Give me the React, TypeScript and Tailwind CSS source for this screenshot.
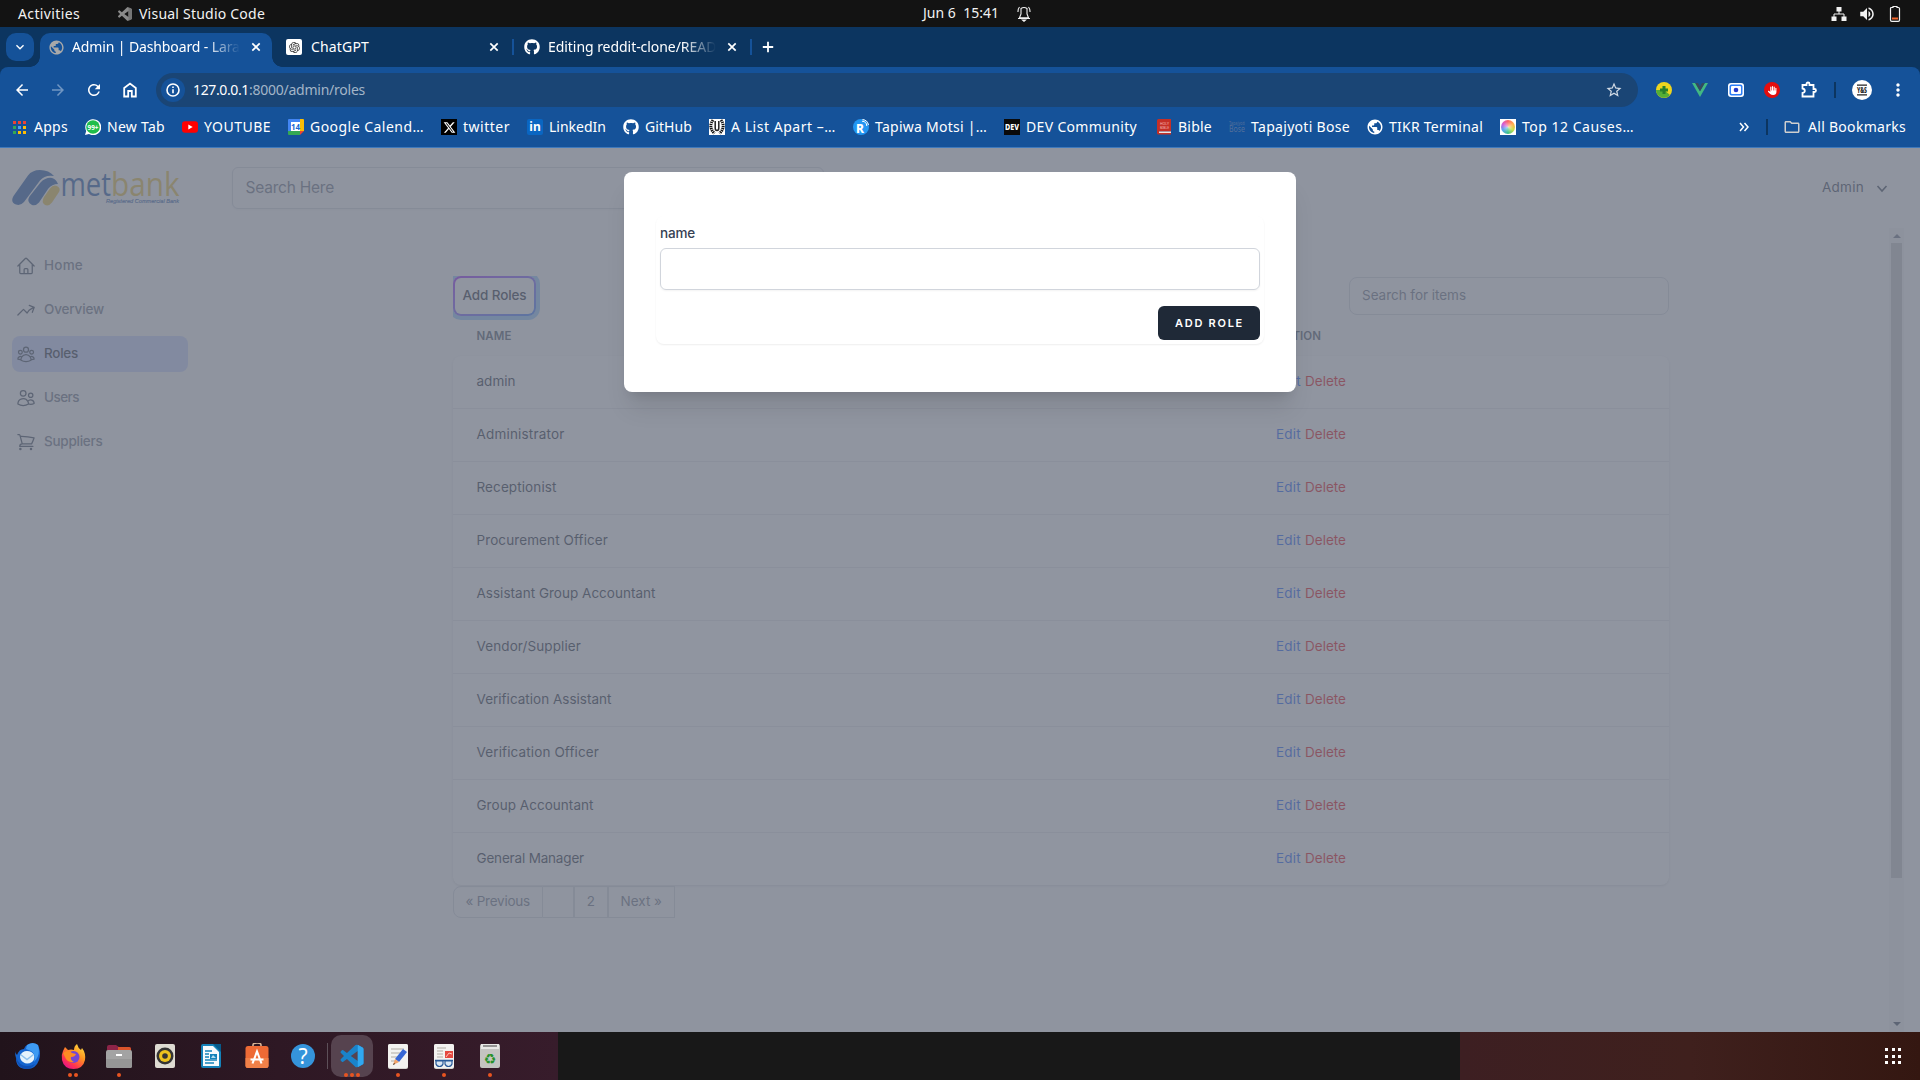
import { useLayoutEffect, useRef, type ReactNode } from "react";
import {
  MdArrowBack, MdArrowForward, MdKeyboardArrowDown, MdMoreVert,
  MdOutlineFolder, MdRefresh, MdStarOutline, MdVolumeUp, MdPublic,
} from "react-icons/md";
import { FaGithub, FaXTwitter, FaHand } from "react-icons/fa6";
import {
  HiOutlineArrowTrendingUp, HiOutlineHome, HiOutlineShoppingCart, HiOutlineUserGroup, HiOutlineUsers,
} from "react-icons/hi2";
import { RiOpenaiFill } from "react-icons/ri";

/* Text that spreads its letter spacing so it fills exactly `w` pixels. */
function Fit({ w, children, className = "" }: { w: number; children: string; className?: string }) {
  const inner = useRef<HTMLSpanElement>(null);
  useLayoutEffect(() => {
    const el = inner.current;
    if (!el) return;
    el.style.letterSpacing = "0px";
    const natural = el.getBoundingClientRect().width;
    el.style.letterSpacing = `${(w - natural) / children.length}px`;
  }, [w, children]);
  return (
    <span className={`inline-block shrink-0 whitespace-pre ${className}`} style={{ width: w }}>
      <span ref={inner}>{children}</span>
    </span>
  );
}

function CodeMark({ size }: { size: number }) {
  return (
    <svg width={size} height={size} viewBox="0 0 100 100" fillRule="evenodd" className="shrink-0">
      <path fill="#8a8a8a" d="M71 1 96 13Q100 15 100 20V80Q100 85 96 87L71 99Q67 100 64 97L28 63 12 75Q9 77 6 75L1 70Q-1 67 1 64L15 50 1 36Q-1 33 1 30L6 25Q9 23 12 25L28 37 64 3Q67 0 71 1ZM75 28 45 50 75 72Z" />
      <path fill="#767676" d="M75 1 96 13Q100 15 100 20V80Q100 85 96 87L75 99Z" />
    </svg>
  );
}

function Cross({ className }: { className: string }) {
  return <svg width="14" height="14" viewBox="0 0 14 14" fill="none" stroke="#fff" strokeWidth="1.7" className={className}><path d="m3.3 3.300 7.400 7.400M10.700 3.300 3.300 10.700" /></svg>;
}

function TopBar() {
  return (
    <header className="flex h-[27px] shrink-0 items-center bg-[#131313] text-[14px] leading-none text-[#f2f2f2]">
      <Fit w={62} className="ml-[18px]">Activities</Fit>
      <div className="ml-[38px]"><CodeMark size={14} /></div>
      <Fit w={126} className="ml-[7px]">Visual Studio Code</Fit>
      <Fit w={76} className="ml-[658px] pb-0.5">Jun 6  15:41</Fit>
      <svg width="14" height="16" viewBox="0 0 14 16" fill="none" stroke="#f2f2f2" strokeWidth="1.1" className="ml-[18px]"><path d="M4 2.500Q7 .500 10 2.500V8l1.500 3.800H2.500L4 8ZM2.500 1Q.800 3 1 6M11.500 1q1.700 2 1.500 5M1 12.500h12"/><path d="M5.500 14h3L7 15.300Z" fill="#f2f2f2"/></svg>
      <div className="ml-[800px] flex items-center gap-[11px]">
        <svg width="16" height="14" viewBox="0 0 16 14" fill="#f2f2f2"><path d="M5.500 0h5v4.500h-5zM.500 9.500h5V14h-5zM10.500 9.500h5V14h-5z"/><path d="M8 4v3M3 10V7h10v3" stroke="#f2f2f2" fill="none"/></svg>
        <MdVolumeUp size={18} />
        <svg width="12" height="16" viewBox="0 0 12 16" className="ml-0.5"><path d="M4 1.500V.500h4v1h1.500q1 0 1 1v11.500q0 1.300-1.300 1.300H2.800q-1.300 0-1.300-1.300V2.500q0-1 1-1Z" fill="none" stroke="#f2f2f2" strokeWidth="1.200"/><path d="M3 11.500h6v2H3z" fill="#f0642a"/></svg>
      </div>
    </header>
  );
}

function TabStrip() {
  return (
    <div className="flex h-10 shrink-0 items-start bg-[#0c3560] pt-1.5 text-[14px] leading-none text-white">
      <div className="ml-1.5 flex size-7 items-center justify-center rounded-[10px] bg-[#155299]"><MdKeyboardArrowDown size={16} /></div>
      <div className="relative ml-1.5 flex h-[34px] w-[232px] items-center rounded-t-[10px] bg-[#155299] pb-1.5">
        <i className="absolute bottom-0 -left-2.5 size-2.5 bg-[radial-gradient(circle_at_0_0,transparent_9.5px,#155299_10px)]" />
        <i className="absolute -right-2.5 bottom-0 size-2.5 bg-[radial-gradient(circle_at_100%_0,transparent_9.5px,#155299_10px)]" />
        <MdPublic size={17} className="ml-2 text-[#a9a9a9]" />
        <div className="ml-[7px] w-[168px] overflow-hidden py-1 [mask-image:linear-gradient(90deg,#000_80%,transparent)]"><Fit w={186}>Admin | Dashboard - Laravel</Fit></div>
        <Cross className="ml-[9px]" />
      </div>
      <div className="ml-[14px] flex h-7 items-center">
        <span className="flex size-4 items-center justify-center rounded-[2px] bg-white text-[#333]"><RiOpenaiFill size={13} /></span>
        <Fit w={58} className="ml-[9px]">ChatGPT</Fit>
        <Cross className="ml-[118px]" />
        <i className="ml-[11px] h-4 w-0.5 bg-[#155299]" />
        <FaGithub size={16} className="ml-[10px]" />
        <div className="ml-2 w-[168px] overflow-hidden py-1 [mask-image:linear-gradient(90deg,#000_80%,transparent)]"><Fit w={214}>Editing reddit-clone/README.md</Fit></div>
        <Cross className="ml-[9px]" />
        <i className="ml-[11px] h-4 w-0.5 bg-[#155299]" />
        <svg width="12" height="12" viewBox="0 0 12 12" stroke="#fff" strokeWidth="1.800" className="ml-[10px]"><path d="M6 .800v10.400M.800 6h10.400"/></svg>
      </div>
    </div>
  );
}

function Toolbar() {
  return (
    <div className="shrink-0 bg-[#0c3560]">
      <div className="flex h-[46px] items-center rounded-t-lg bg-[#155299] text-[14px] leading-none text-white">
        <div className="ml-[13px] flex items-center gap-[18px]">
          <MdArrowBack size={18} />
          <MdArrowForward size={18} className="text-[#7096c2]" />
          <MdRefresh size={18} />
          <svg width="18" height="18" viewBox="0 0 18 18" fill="none" stroke="#fff" strokeWidth="1.800"><path d="M3.200 7 9 2.600 14.800 7v8.500h-4V10H7.200v5.500h-4Z"/></svg>
        </div>
        <div className="ml-[17px] flex h-[34px] w-[1482px] items-center rounded-full bg-[#1a4575]">
          <span className="ml-[5px] flex size-6 items-center justify-center rounded-full bg-[#155299]">
            <svg width="14" height="14" viewBox="0 0 14 14" fill="none" stroke="#fff" strokeWidth="1.600"><circle cx="7" cy="7" r="6"/><path d="M7 6.200v4M7 3.600v1.500"/></svg>
          </span>
          <Fit w={56} className="ml-2">127.0.0.1</Fit>
          <Fit w={116} className="text-[#a3b5c8]">:8000/admin/roles</Fit>
          <MdStarOutline size={18} className="mr-[15px] ml-auto text-[#d2dbe5]" />
        </div>
        <svg width="16" height="16" viewBox="0 0 16 16" className="ml-[18px]"><circle cx="8" cy="8" r="8" fill="#edd51f"/><path d="M0 8a8 8 0 0 0 14 5L8 8Z" fill="#54ae35"/><path d="M6.500 4h3v2.500H12v3H9.500V12h-3V9.500H4v-3h2.500Z" fill="#277f2b"/></svg>
        <svg width="16" height="14" viewBox="0 0 16 14" className="ml-5"><path d="M0 0h3.200L8 8.300 12.800 0H16L8 14Z" fill="#42b883"/><path d="M3.200 0H6l2 3.500L10 0h2.800L8 8.300Z" fill="#35495e"/></svg>
        <svg width="16" height="14" viewBox="0 0 16 14" className="ml-5"><rect width="16" height="14" rx="3" fill="#fff"/><rect x="1.500" y="1.500" width="13" height="11" rx="2" fill="#2c7ef7"/><rect x="3" y="3" width="10" height="8" rx="1" fill="#fff"/><circle cx="8" cy="7" r="2.300" fill="#2438c9"/></svg>
        <span className="ml-5 flex size-4 items-center justify-center rounded-full bg-[#e40d0d]"><FaHand size={9} /></span>
        <svg width="18" height="18" viewBox="0 0 18 18" fill="none" stroke="#fff" strokeWidth="1.800" className="ml-[20px]"><path d="M2.500 4h4V3q0-1.500 1.500-1.500T9.500 3v1h4v4h1q1.500 0 1.500 1.500T14.500 11h-1v4.500h-11V12q2.300-.300 2.300-2.200T2.500 7.500Z"/></svg>
        <i className="ml-4 h-4 w-0.5 bg-[#0c3560]" />
        <svg width="20" height="20" viewBox="0 0 20 20" className="ml-4"><circle cx="10" cy="10" r="10" fill="#fff"/><path d="M5 5.200h10M5 14.800h10" stroke="#222" strokeWidth="1.200"/><text x="5" y="13" fontSize="8" fontWeight="800" fill="#222" textLength="10" lengthAdjust="spacingAndGlyphs">Y&amp;S</text></svg>
        <MdMoreVert size={20} className="ml-4" />
      </div>
    </div>
  );
}

const appColors = ["bg-[#ea4335]", "bg-[#ea4335]", "bg-[#ea4335]", "bg-[#34a853]", "bg-[#4aa0f5]", "bg-[#fbbc05]", "bg-[#34a853]", "bg-[#fbbc05]", "bg-[#fbbc05]"];

const bookmarks: { name: string; w: number; icon: ReactNode }[] = [
  { name: "New Tab", w: 58, icon: <svg width="16" height="16" viewBox="0 0 16 16"><path d="M0 16 1.200 12A8 8 0 1 1 4 15Z" fill="#fff"/><circle cx="8" cy="8" r="6.800" fill="#1fbd4a"/><text x="8" y="10.800" fontSize="7.500" fontWeight="700" textAnchor="middle" fill="#fff" textLength="11" lengthAdjust="spacingAndGlyphs">99+</text></svg> },
  { name: "YOUTUBE", w: 67, icon: <svg width="16" height="16" viewBox="0 0 16 16"><rect y="2.300" width="16" height="11.400" rx="3" fill="#f00"/><path d="m6.300 5.500 4.400 2.500-4.400 2.500Z" fill="#fff"/></svg> },
  { name: "Google Calend…", w: 114, icon: <svg width="16" height="16" viewBox="0 0 16 16"><path d="M0 1q0-1 1-1h11v3H3v10H0Z" fill="#4285f4"/><path d="M12 0h3q1 0 1 1v11h-4Z" fill="#fbbc04"/><path d="M0 12h12v4H1q-1 0-1-1Z" fill="#34a853"/><path d="M12 12h4l-4 4Z" fill="#ea4335"/><path d="M3 3h9v9H3z" fill="#fff"/><text x="7.500" y="10.600" fontSize="8" fontWeight="700" textAnchor="middle" fill="#1967d2">14</text></svg> },
  { name: "twitter", w: 47, icon: <span className="flex size-4 items-center justify-center bg-black"><FaXTwitter size={13} /></span> },
  { name: "LinkedIn", w: 57, icon: <span className="flex size-4 items-center justify-center rounded-[2px] bg-[#0a66c2] pb-px text-[12px] font-bold">in</span> },
  { name: "GitHub", w: 47, icon: <FaGithub size={16} /> },
  { name: "A List Apart –…", w: 105, icon: <svg width="16" height="16" viewBox="0 0 16 16"><path d="M0 0h16v16H0z" fill="#fff"/><path d="M6.200 2v7q0 2.500 1.800 2.500T9.800 9V2" fill="none" stroke="#222" strokeWidth="1.500"/><path d="M4 1Q-1 8 5.500 14.500M12 1q5 7-1.500 13.500" fill="none" stroke="#111" strokeWidth="3" strokeDasharray="1.400 .700"/></svg> },
  { name: "Tapiwa Motsi |…", w: 112, icon: <svg width="16" height="16" viewBox="0 0 16 16"><circle cx="8" cy="8" r="8" fill="#2196f3"/><text x="7" y="14" fontSize="12" fontWeight="800" textAnchor="middle" fill="#fff">R</text><path d="M9 2.200a5 5 0 0 1 4.800 4.800M9.500 .500q5 .500 6 5.500" stroke="#fff" fill="none"/></svg> },
  { name: "DEV Community", w: 111, icon: <svg width="16" height="16" viewBox="0 0 16 16"><path d="M0 0h16v16H0z" fill="#0a0a0a"/><text x="1" y="11" fontSize="8" fontWeight="800" fill="#fff" textLength="14" lengthAdjust="spacingAndGlyphs">DEV</text></svg> },
];

const moreBookmarks: { name: string; w: number; icon: ReactNode }[] = [
  { name: "Bible", w: 34, icon: <svg width="16" height="16" viewBox="0 0 16 16"><path d="M1 1.500Q1 0 2.500 0H15v12.500H3.500V14H15v1.500H2.500Q1 15.500 1 14Z" fill="#c52f26"/><path d="M3 12.500h12V14H3z" fill="#f2e5e0"/><text x="4" y="5.500" fontSize="4" fill="#f3b6b0" textLength="9" lengthAdjust="spacingAndGlyphs">HOLY</text><text x="4" y="9.500" fontSize="4" fill="#f3b6b0" textLength="9" lengthAdjust="spacingAndGlyphs">BIBLE</text></svg> },
  { name: "Tapajyoti Bose", w: 99, icon: <svg width="16" height="16" viewBox="0 0 16 16" fill="#54709a"><text x="0" y="5.500" fontSize="5" textLength="16" lengthAdjust="spacingAndGlyphs">Tapajyoti</text><text x="0" y="13" fontSize="8" textLength="16" lengthAdjust="spacingAndGlyphs">Bose</text></svg> },
  { name: "TIKR Terminal", w: 94, icon: <MdPublic size={18} className="-m-px" /> },
  { name: "Top 12 Causes…", w: 112, icon: <span className="flex size-4 items-center justify-center bg-white"><span className="size-3.5 rounded-full bg-[radial-gradient(#ffffff99,transparent_55%),conic-gradient(#f66,#ffb04d,#c6df49,#3cc28a,#58a9ef,#d45bd8,#f66)]" /></span> },
];

function BookmarkBar() {
  return (
    <div className="flex h-[35px] shrink-0 items-center border-b border-[#3f79bc] bg-[#155299] pb-1.5 text-[14px] leading-none text-white">
      <div className="ml-[13px] grid size-[13px] grid-cols-3 gap-0.5">{appColors.map((c, i) => <i key={i} className={c} />)}</div>
      <Fit w={34} className="ml-2">Apps</Fit>
      <div className="ml-[17px] flex items-center gap-[17px]">
        {bookmarks.map((b) => <div key={b.name} className="flex items-center gap-1.5">{b.icon}<Fit w={b.w}>{b.name}</Fit></div>)}
      </div>
      <div className="ml-[19px] flex items-center gap-[17px]">
        {moreBookmarks.map((b) => <div key={b.name} className="flex items-center gap-1.5">{b.icon}<Fit w={b.w}>{b.name}</Fit></div>)}
      </div>
      <svg width="10" height="10" viewBox="0 0 10 10" fill="none" stroke="#fff" strokeWidth="1.500" className="ml-[105px]"><path d="m1 1 3.500 4L1 9M5.500 1 9 5 5.500 9"/></svg>
      <i className="ml-[17px] h-4 w-0.5 bg-[#0c3560]" />
      <MdOutlineFolder size={18} className="ml-[15px] text-[#cfcfcf]" />
      <Fit w={98} className="ml-[7px]">All Bookmarks</Fit>
    </div>
  );
}

function Logo() {
  return (
    <svg width="168" height="38" viewBox="0 0 168 38" className="shrink-0 font-['Open_Sans',sans-serif]">
      <path d="M1.500 27 16 6.500Q20 1 28 1q9 0 14 6-9-1.500-14 4.500L12 33Q8.500 37 4 35.500-2 33 1.500 27Z" fill="#1852a4" />
      <path d="m17.500 27.500 11-14Q34 8 40 9q4 1 6 6-6 0-10 5L27 33.500Q24 37 20 36q-6-3-2.500-8.500Z" fill="#1852a4" />
      <path d="m32 28 6-8.500q3-4 7-2.500 4 2 2 6l-7 10.500Q37 37.500 33 36q-4-3-1-8Z" fill="#e8be3c" />
      <text x="48.500" y="26.500" fontSize="33" fill="#1852a4" textLength="50.500" lengthAdjust="spacingAndGlyphs">met</text>
      <text x="99" y="26.500" fontSize="33" fill="#e8be3c" textLength="68.500" lengthAdjust="spacingAndGlyphs">bank</text>
      <text x="94" y="34" fontSize="6" fontStyle="italic" fill="#1852a4" stroke="#1852a4" strokeWidth=".15" textLength="73" lengthAdjust="spacingAndGlyphs" fontFamily="Liberation Sans">Registered Commercial Bank</text>
    </svg>
  );
}

const nav = [
  { name: "Home", w: 39, Icon: HiOutlineHome },
  { name: "Overview", w: 60, Icon: HiOutlineArrowTrendingUp },
  { name: "Roles", w: 34, Icon: HiOutlineUserGroup, active: true },
  { name: "Users", w: 35, Icon: HiOutlineUsers },
  { name: "Suppliers", w: 58.5, Icon: HiOutlineShoppingCart },
];

const roles: [string, number][] = [
  ["admin", 39], ["Administrator", 88], ["Receptionist", 80], ["Procurement Officer", 131.5], ["Assistant Group Accountant", 179],
  ["Vendor/Supplier", 104.5], ["Verification Assistant", 135], ["Verification Officer", 122.5], ["Group Accountant", 117], ["General Manager", 107.5],
];

function RolesPage() {
  return (
    <div className="flex h-full flex-col bg-[#fafafb] text-[13.5px] leading-none text-gray-800">
      <div className="flex h-20 shrink-0 items-center pl-3">
        <Logo />
        <div className="ml-[52px] flex h-[42px] w-[592px] items-center rounded-md border border-gray-300 pl-[12.5px] text-[15.5px] text-gray-500 shadow-xs"><Fit w={88.5}>Search Here</Fit></div>
        <Fit w={42} className="ml-[998px] text-gray-700">Admin</Fit>
        <svg width="12" height="8" viewBox="0 0 12 8" fill="none" stroke="#374151" strokeWidth="1.600" className="mt-0.5 ml-3"><path d="m1.500 1 4.500 5L10.500 1"/></svg>
      </div>
      <div className="flex min-h-0 flex-1">
        <nav className="ml-3 flex w-[176px] flex-col gap-2 pt-5">
          {nav.map(({ name, w, Icon, active }) => (
            <div key={name} className={active ? "flex h-9 items-center rounded-lg bg-indigo-200 pl-1 text-gray-800" : "flex h-9 items-center rounded-lg pl-1 text-gray-500"}>
              <Icon size={20} className="text-gray-700" />
              <Fit w={w} className="ml-2 font-medium">{name}</Fit>
            </div>
          ))}
        </nav>
        <main className="ml-[265px] w-[1216px] pt-12">
          <div className="flex h-11 justify-between overflow-hidden">
            <div className="h-10 w-[83px] rounded-lg bg-linear-to-br from-purple-600 to-blue-500 p-0.5 ring-4 ring-blue-300">
              <div className="flex h-full items-center justify-center rounded-md bg-white"><Fit w={64} className="font-medium">Add Roles</Fit></div>
            </div>
            <div className="mt-px flex h-[38px] w-80 items-center rounded-lg border border-gray-300 pl-3 text-gray-500"><Fit w={104}>Search for items</Fit></div>
          </div>
          <div className="grid h-8 grid-cols-[823px_1fr] items-center pt-0.5 text-[11.5px] font-semibold text-gray-600">
            <Fit w={35} className="ml-[23.5px]">NAME</Fit><Fit w={45}>ACTION</Fit>
          </div>
          <div className="mt-1 rounded-lg bg-white shadow-sm">
            {roles.map(([name, w], i) => (
              <div key={name} className={i < 9 ? "grid h-[53px] grid-cols-[823px_1fr] items-center border-b border-gray-200" : "grid h-[52px] grid-cols-[823px_1fr] items-center"}>
                <Fit w={w} className="ml-[23.5px]">{name}</Fit>
                <div className="flex gap-1"><Fit w={25} className="text-blue-600">Edit</Fit><Fit w={41} className="text-red-600">Delete</Fit></div>
              </div>
            ))}
          </div>
          <div className="mt-px flex h-8 text-gray-500">
            <div className="flex w-[90px] items-center rounded-l-lg border border-gray-300 pl-[11.5px]"><Fit w={64.5}>« Previous</Fit></div>
            <div className="w-[31px] border-y border-r border-gray-300" />
            <div className="flex w-[34px] items-center justify-center border border-gray-300"><Fit w={8.5}>2</Fit></div>
            <div className="flex w-[67px] items-center border border-gray-300 pl-[11.5px]"><Fit w={41.5}>Next »</Fit></div>
          </div>
        </main>
        <div className="ml-[220px] flex w-[15px] flex-col items-center justify-between bg-[#f4f4f4]">
          <div className="flex w-full flex-col items-center pt-1.5">
            <i className="h-0 w-0 border-x-4 border-b-4 border-x-transparent border-b-gray-500" />
            <i className="mt-[5px] h-[635px] w-[11px] bg-[#c1c1c1]" />
          </div>
          <i className="mb-1.5 h-0 w-0 border-x-4 border-t-4 border-x-transparent border-t-gray-700" />
        </div>
      </div>
    </div>
  );
}

function Modal() {
  return (
    <div className="absolute inset-0 flex items-start justify-center bg-[#6b7280]/75 pt-6">
      <div className="h-[220px] w-[672px] rounded-lg bg-white p-8 shadow-xl">
        <div className="mt-3 h-[128px] rounded-lg px-1 pt-[11px] text-[13.5px] leading-none shadow-[0_1px_2px_0_rgb(0_0_0/0.07)]">
          <Fit w={35} className="block h-3.5 font-medium text-gray-700">name</Fit>
          <div className="mt-[7px] h-[42px] rounded-md border border-gray-300 shadow-xs" />
          <button className="mt-4 ml-auto flex h-[34px] w-[102px] items-center rounded-md bg-[#1f2937] pl-[17px] text-[11px] font-semibold text-white"><Fit w={69}>ADD ROLE</Fit></button>
        </div>
      </div>
    </div>
  );
}

const sheet = <><rect x="3" y="1" width="20" height="25" rx="2" fill="#d6d4d0"/><rect x="3" y="1" width="20" height="24" rx="2" fill="#f3f2f0"/></>;

const dock: { id: string; dots: number; art: ReactNode }[] = [
  { id: "mail", dots: 0, art: <><path d="M1 8q0 4 1 7Q2 26 13 26q9 0 12-9 2-7 0-12l-1-3q-6-3-11 0-2 1-3 4Q5 6 3 12 1 10 1 8Z" fill="#1565cf"/><path d="M13 2q6-4 11 0 3 10-4 17 2-8-3-11l-5-2Z" fill="#3e9bf3"/><path d="M6 13q2-5 7-5t7 4q1 5-2 7-5 3-9 0-3-2-3-6Z" fill="#e6f3fc"/><path d="m6.500 11.500 6.500 5 6.500-5" fill="none" stroke="#8ec1ed" strokeWidth="1.500"/><path d="M2 14q3 9 11 9 5 0 8-2-3 5-9 5Q3 25 2 14Z" fill="#0f50b5"/></> },
  { id: "web", dots: 2, art: <><defs><linearGradient id="fox" x1="1" y1="0" x2=".3" y2="1"><stop stopColor="#fff04a"/><stop offset=".45" stopColor="#ff9320"/><stop offset=".8" stopColor="#ff3450"/><stop offset="1" stopColor="#e71586"/></linearGradient></defs><path d="M3 8 5 4l3 3q3-1 6 0 0-4 3-6 1 4 4 6l1-2q4 5 3 12-2 9-11.500 9T2 17Q1 12 3 8Z" fill="url(#fox)"/><circle cx="13.500" cy="14" r="6" fill="#7546d5"/><path d="M3 10q5-4 9 0l4 1q-1 3-5 3-1 3 3 5-7 1-9-5Z" fill="#ff8b22"/></> },
  { id: "files", dots: 1, art: <><path d="M1 4q0-2 2-2h7l3 2h10q2 0 2 2v7H1Z" fill="#8d2448"/><path d="M12 4h11q2 0 2 2v5H12Z" fill="#d9542b"/><rect x="0" y="7" width="26" height="18" rx="2" fill="#a3a3a3"/><path d="M0 16h26v7q0 2-2 2H2q-2 0-2-2Z" fill="#969696"/><path d="M10 11h6v2h-6z" fill="#fff"/></> },
  { id: "music", dots: 0, art: <><rect x="3" y="1" width="20" height="24" rx="2" fill="#dedbd2"/><circle cx="13" cy="13" r="8.500" fill="#343434"/><circle cx="13" cy="13" r="6" fill="#edc31e"/><circle cx="13" cy="13" r="2.800" fill="#343434"/></> },
  { id: "writer", dots: 0, art: <><path d="M3 3q0-2 2-2h12l6 6v16q0 2-2 2H5q-2 0-2-2Z" fill="#1582b9"/><path d="M5 3h10l6 6v14H5Z" fill="#f6fafc"/><path d="M15 1h8v8Z" fill="#075a8a"/><path d="M7 8h7M7 11h4M7 14h4M7 17h12M7 20h9" stroke="#1582b9" strokeWidth="1.500"/><path d="M12 11h7v5h-7z" fill="#1582b9"/><path d="m13 15 2-3 3 3Z" fill="#b4e0f2"/></> },
  { id: "software", dots: 0, art: <><path d="M9 5V2q0-2 4-2t4 2v3" fill="none" stroke="#d9b596" strokeWidth="1.600"/><rect x="1.500" y="3" width="23" height="22" rx="2.500" fill="#ee6a35"/><path d="M1.500 15h23v7.500q0 2.500-2.500 2.500h-18q-2.500 0-2.500-2.500Z" fill="#f08048"/><path d="m8.500 20.500 4.500-12 4.500 12M6.500 16.500h13" fill="none" stroke="#fff" strokeWidth="2.100"/></> },
  { id: "help", dots: 0, art: <><circle cx="13" cy="13" r="12" fill="#3594db"/><text x="13" y="20.500" textAnchor="middle" fontSize="21" fill="#fff">?</text></> },
  { id: "code", dots: 3, art: <g transform="translate(1.500 1.500) scale(.23)" fillRule="evenodd"><path fill="#1a83ca" d="M71 1 96 13Q100 15 100 20V80Q100 85 96 87L71 99Q67 100 64 97L28 63 12 75Q9 77 6 75L1 70Q-1 67 1 64L15 50 1 36Q-1 33 1 30L6 25Q9 23 12 25L28 37 64 3Q67 0 71 1ZM75 28 45 50 75 72Z"/><path fill="#30a8f0" d="M75 1 96 13Q100 15 100 20V80Q100 85 96 87L75 99Z"/></g> },
  { id: "editor", dots: 1, art: <>{sheet}<path d="M6 6h13M6 10h12M6 14h8M6 18h4" stroke="#c8c4bd" strokeWidth="1.500"/><path d="m10 16 8-10 4 3-8 10Z" fill="#3666d5"/><path d="m10 16 4 3-6 3Z" fill="#f0a36a"/><path d="m8 22 2-1-1-1Z" fill="#222"/></> },
  { id: "viewer", dots: 1, art: <>{sheet}<path d="M6 5h9M6 8h6M6 11h6M6 14h6" stroke="#c8c4bd" strokeWidth="1.500"/><path d="M14 8h8v7h-8z" fill="#e5483f"/><path d="m15 14 3-4 3 1" stroke="#ffc3b9" fill="none"/><path d="M4 17.500h18" stroke="#285a99" strokeWidth="1.500"/><path d="M5 18h7v3q-1 2.500-3.500 2.500T5 21ZM14 18h7v3q-1 2.500-3.500 2.500T14 21Z" fill="#d9e6f3" stroke="#285a99" strokeWidth="1.200"/></> },
  { id: "trash", dots: 1, art: <><rect x="3" y="1" width="20" height="24" rx="2" fill="#c4c4c1"/><path d="M4 1h18v5H4z" fill="#e9e9e7"/><path d="M6 3h14" stroke="#777" strokeWidth="1.500"/><text x="13" y="20.500" textAnchor="middle" fontSize="14" fill="#27912a" fontFamily="DejaVu Sans">♻</text></> },
];

function Dock() {
  return (
    <footer className="flex h-12 shrink-0 bg-[#181818]">
      <div className="flex w-[558px] bg-linear-to-r from-[#21131b] via-[#2e1824] to-[#371c2b] pl-1">
        {dock.map(({ id, dots, art }, i) => (
          <div key={id} className={i === 7 ? "relative ml-[3px] flex w-[46px] flex-col items-center before:absolute before:-left-0.5 before:top-[11px] before:h-[26px] before:w-px before:bg-[#5d5059]" : "relative flex w-[46px] flex-col items-center"}>
            <div className={id === "code" ? "mt-[3px] flex h-[42px] w-[42px] items-center justify-center rounded-[10px] bg-[#56434f]" : "mt-[3px] flex h-[42px] w-[42px] items-center justify-center"}>
              <svg width="26" height="26" viewBox="0 0 26 26">{art}</svg>
            </div>
            <div className="absolute top-[41px] flex gap-0.5">
              {Array.from({ length: dots }, (_, n) => <i key={n} className="size-1 rounded-full bg-[#e95420]" />)}
            </div>
          </div>
        ))}
      </div>
      <div className="ml-auto flex w-[460px] items-center justify-end bg-linear-to-r from-[#3d1f22] via-[#3f201d] to-[#341711] pr-[19px]">
        <div className="grid grid-cols-3 gap-[3.5px]">{Array.from({ length: 9 }, (_, n) => <i key={n} className="size-[3px] bg-white" />)}</div>
      </div>
    </footer>
  );
}

export default function App() {
  return (
    <div className="flex h-[1080px] w-[1920px] flex-col overflow-hidden font-['Noto_Sans',sans-serif]">
      <TopBar />
      <TabStrip />
      <Toolbar />
      <BookmarkBar />
      <div className="relative min-h-0 flex-1 font-['Inter',sans-serif]">
        <RolesPage />
        <Modal />
      </div>
      <Dock />
    </div>
  );
}
